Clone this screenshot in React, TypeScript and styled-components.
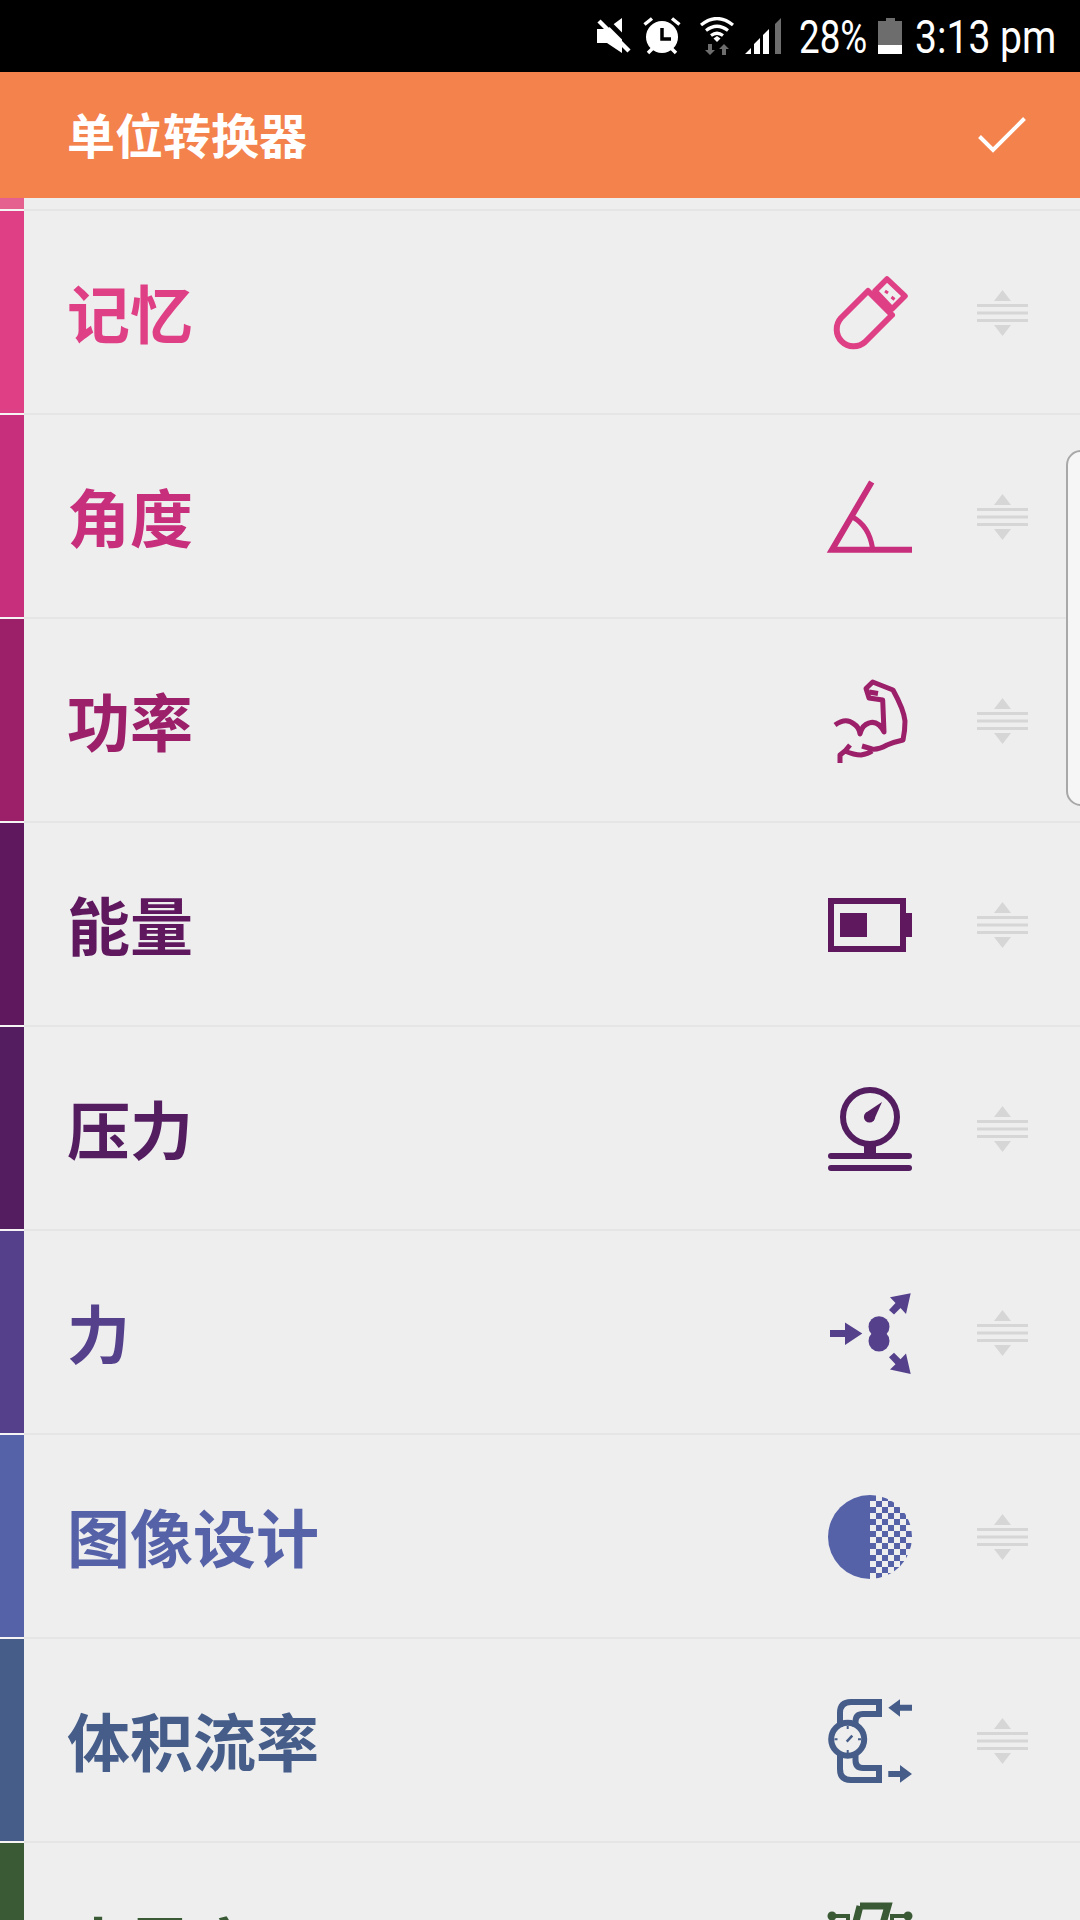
import React from "react";
import styled, { createGlobalStyle } from "styled-components";

const Global = createGlobalStyle`
  html, body { margin: 0; padding: 0; background: #eeeeef; }
  #root { width: 1080px; height: 1920px; }
`;

const Page = styled.div`
  position: relative;
  width: 1080px;
  height: 1920px;
  overflow: hidden;
  display: flex;
  flex-direction: column;
  background: #eeeeef;
  font-family: "Noto Sans CJK SC", "Noto Sans", sans-serif;
`;

const StatusBar = styled.div`
  height: 72px;
  flex: none;
  background: #000;
  color: #fff;
  display: flex;
  align-items: center;
  justify-content: flex-end;
  padding-right: 25px;
`;

const StatusIcon = styled.svg<{ $ml: number }>`
  flex: none;
  display: block;
  margin-left: ${(p) => p.$ml}px;
`;

const StatusText = styled.span<{ $ml: number; $w: number; $squeeze: number }>`
  font-family: Roboto, "Liberation Sans", sans-serif;
  font-size: 46px;
  line-height: 72px;
  width: ${(p) => p.$w}px;
  margin-left: ${(p) => p.$ml}px;
  margin-top: 1px;
  white-space: nowrap;
  display: block;
  transform: scaleX(${(p) => p.$squeeze});
  transform-origin: left center;
`;

const AppBar = styled.header`
  height: 126px;
  flex: none;
  background: #f3824d;
  color: #fff;
  display: flex;
  align-items: center;
  justify-content: space-between;
  padding: 0 54px 0 67px;
`;

const Title = styled.h1`
  margin: -5px 0 0;
  font-size: 48px;
  font-weight: 700;
  line-height: 1;
`;

const CheckIcon = styled.svg`
  display: block;
`;

const List = styled.div`
  flex: 1;
  min-height: 0;
  overflow: hidden;
`;

const PartialRow = styled.div`
  height: 13px;
  display: flex;
`;

const Row = styled.div`
  height: 204px;
  flex: none;
  display: flex;
`;

const Stripe = styled.div<{ $color: string }>`
  width: 24px;
  flex: none;
  box-sizing: border-box;
  background: ${(p) => p.$color};
  background-clip: padding-box;
  border-bottom: 2px solid #f6f4f5;
`;

const RowBody = styled.div<{ $color: string }>`
  flex: 1;
  box-sizing: border-box;
  border-bottom: 2px solid #e5e5e6;
  padding: 2px 52px 0 43px;
  display: flex;
  align-items: center;
  color: ${(p) => p.$color};
`;

const Label = styled.span`
  flex: 1;
  margin-top: -6px;
  font-size: 63px;
  font-weight: 700;
  line-height: 1;
  white-space: nowrap;
`;

const CategoryIcon = styled.svg`
  width: 84px;
  height: 84px;
  flex: none;
  display: block;
  overflow: visible;
`;

const DragHandle = styled.svg`
  width: 51px;
  height: 46px;
  flex: none;
  display: block;
  margin-left: 65px;
  fill: #d6d6d6;
`;

const EdgeTab = styled.div`
  position: absolute;
  left: 1066px;
  top: 450px;
  width: 30px;
  height: 356px;
  box-sizing: border-box;
  border: 2px solid #a8a8a8;
  border-radius: 22px;
  background: #f6f6f6;
`;

const Usb = () => (
  <CategoryIcon viewBox="0 0 84 84" fill="none" stroke="currentColor" strokeWidth="6">
    <path d="M40 20 L64 44 L37 71 A17 17 0 0 1 13 47 Z" strokeLinejoin="round" />
    <path d="M59 8 L77 25 L64 38 L47 20 Z" strokeWidth="5.5" strokeLinejoin="round" />
    <path d="M57 20 L60 22 M63.5 26 L66.5 28.5" strokeWidth="3" />
  </CategoryIcon>
);

const Angle = () => (
  <CategoryIcon viewBox="0 0 84 84" fill="none" stroke="currentColor" strokeWidth="6">
    <path d="M84 74.7 H4 L43.7 7" />
    <path d="M24.5 42 Q41 51 44.5 73" strokeWidth="5" />
  </CategoryIcon>
);

const Arm = () => (
  <CategoryIcon viewBox="0 0 84 84" fill="none" stroke="currentColor" strokeWidth="5" strokeLinejoin="round">
    <path d="M7 46 Q18 38 26 45 Q31 48 32 55 Q34 46 41 44 Q50 41 56 53 L54.7 21 L41 19 L38 9.5 L44.7 3 L65 11 Q76 31 77 42 Q77 52 75 61 Q66 63 59 66 Q50 71 44 70 L34 67" />
    <path d="M22 66 L17 72 Q26 76 33 76 Q40 75 44 72 M17 72 L12 76 V84" />
    <path d="M41 13 L50 14.5" />
  </CategoryIcon>
);

const Battery = () => (
  <CategoryIcon viewBox="0 0 84 84" fill="currentColor">
    <rect x="3" y="18" width="72" height="48" fill="none" stroke="currentColor" strokeWidth="6" />
    <rect x="78" y="30" width="6" height="24" />
    <rect x="12" y="30" width="27" height="24" />
  </CategoryIcon>
);

const Gauge = () => (
  <CategoryIcon viewBox="0 0 84 84" fill="currentColor">
    <circle cx="42" cy="30" r="27" fill="none" stroke="currentColor" strokeWidth="6" />
    <rect x="36" y="56" width="12" height="12" />
    <rect x="0" y="66" width="84" height="6" rx="3" />
    <rect x="0" y="78" width="84" height="6" rx="3" />
    <circle cx="41.5" cy="30" r="5.6" />
    <path d="M37.5 26 L54 15 L45.5 34 Z" />
  </CategoryIcon>
);

const Force = () => (
  <CategoryIcon viewBox="0 0 84 84" fill="currentColor">
    <path d="M2 39 H17 V31.5 L34.3 42.5 L17 54 V46 H2 Z" />
    <circle cx="51" cy="35.7" r="10.5" />
    <circle cx="51" cy="50" r="10.5" />
    <path d="M82.7 2.3 L62 6.3 L67.5 12 L61 19 L66 23.5 L72.5 17 L78 23 Z" />
    <path d="M82.7 83 L62 78.5 L67.5 73.3 L61 66.3 L66 61.8 L72.5 68.3 L78 62.5 Z" />
  </CategoryIcon>
);

const Contrast = () => (
  <CategoryIcon viewBox="0 0 84 84" fill="currentColor">
    <defs>
      <pattern id="checks" x="42" y="0" width="12" height="12" patternUnits="userSpaceOnUse">
        <rect x="0" y="0" width="6" height="6" fill="currentColor" />
        <rect x="6" y="6" width="6" height="6" fill="currentColor" />
      </pattern>
      <clipPath id="disc">
        <circle cx="42" cy="42" r="42" />
      </clipPath>
    </defs>
    <g clipPath="url(#disc)">
      <rect x="0" y="0" width="42" height="84" />
      <rect x="42" y="0" width="42" height="84" fill="url(#checks)" />
    </g>
  </CategoryIcon>
);

const Flow = () => (
  <CategoryIcon viewBox="0 0 84 84" fill="none" stroke="currentColor" strokeWidth="6">
    <path d="M12 28 V14 Q12 3 23 3 H51 V15 H35 Q27.5 15 27.5 23 V28" />
    <path d="M12 56 V70 Q12 81 23 81 H51 V69 H35 Q27.5 69 27.5 61 V56" />
    <circle cx="19.7" cy="40.3" r="16.5" />
    <path d="M18.7 42.7 L24.3 36.7" strokeWidth="2.5" />
    <path d="M19.7 27 V30 M19.7 51 V54 M6.5 40.3 H9.5 M30 40.3 H33" strokeWidth="2" />
    <path d="M60.3 8.7 L72 0.3 V5.7 H84 V11.7 H72 V17.7 Z" fill="currentColor" stroke="none" />
    <path d="M84 75 L72 66 V72 H60.3 V78 H72 V83.7 Z" fill="currentColor" stroke="none" />
  </CategoryIcon>
);

const Circuit = () => (
  <CategoryIcon viewBox="0 0 84 84" fill="none" stroke="currentColor" strokeWidth="7">
    <path d="M32 3 H60 L50 38 M32 3 L23 38" />
    <circle cx="4" cy="13" r="4.5" fill="currentColor" stroke="none" />
    <circle cx="80" cy="13" r="4.5" fill="currentColor" stroke="none" />
    <path d="M4 13 H20 V30 M80 13 H64 V30" strokeWidth="4" />
  </CategoryIcon>
);

const Handle = () => (
  <DragHandle viewBox="0 0 51 46">
    <path d="M25.5 0 L34 11 H17 Z" />
    <rect x="0" y="14" width="51" height="3" />
    <rect x="0" y="21.5" width="51" height="3" />
    <rect x="0" y="29" width="51" height="3" />
    <path d="M17 35 H34 L25.5 46 Z" />
  </DragHandle>
);

const rows = [
  { label: "记忆", color: "#df3f84", Icon: Usb },
  { label: "角度", color: "#c72e7b", Icon: Angle },
  { label: "功率", color: "#9b1f69", Icon: Arm },
  { label: "能量", color: "#5f175e", Icon: Battery },
  { label: "压力", color: "#531d60", Icon: Gauge },
  { label: "力", color: "#55408c", Icon: Force },
  { label: "图像设计", color: "#5662a8", Icon: Contrast },
  { label: "体积流率", color: "#455d88", Icon: Flow },
  { label: "电导率", color: "#395a35", Icon: Circuit },
];

export default function App() {
  return (
    <Page>
      <Global />
      <StatusBar>
        <StatusIcon $ml={0} width="36" height="36" viewBox="0 0 36 36">
          <path d="M1 11 H11 L26 0 V35 L11 25 H1 Z" fill="#fff" />
          <path d="M8 0 L36 28" stroke="#000" strokeWidth="5" />
          <path d="M3 3 L33 33" stroke="#fff" strokeWidth="4.5" />
        </StatusIcon>
        <StatusIcon $ml={11} width="38" height="38" viewBox="0 0 38 38">
          <circle cx="19" cy="20" r="16" fill="#fff" />
          <path d="M19 11 V22 H28" fill="none" stroke="#000" strokeWidth="3.5" />
          <path d="M1.5 7.5 L9 1.5 M36.5 7.5 L29 1.5 M5 36 L10 31 M33 36 L28 31" stroke="#fff" strokeWidth="3.5" />
        </StatusIcon>
        <StatusIcon $ml={19} width="34" height="38" viewBox="0 0 34 38">
          <path d="M1 8 Q17 -5 33 8 M6 13.5 Q17 5 28 13.5 M11 18.5 Q17 14 23 18.5" fill="none" stroke="#fff" strokeWidth="3.2" />
          <path d="M13.5 21.5 L17 19 L20.5 21.5 L17 25 Z" fill="#fff" />
          <path d="M8 27 H12 V33 H15 L10 38 L5 33 H8 Z M22 38 H26 V32 H29 L24 27 L19 32 H22 Z" fill="#6d6d6d" />
        </StatusIcon>
        <StatusIcon $ml={11} width="37" height="36" viewBox="0 0 37 36">
          <path d="M0 36 L6 30 V36 Z M9 36 V26 L15 20 V36 Z" fill="#fff" />
          <path d="M18 36 V17 L24 11 V36 Z" fill="#fff" />
          <path d="M30 36 V6 L36 0 V36 Z" fill="#6d6d6d" />
        </StatusIcon>
        <StatusText $ml={17} $w={69} $squeeze={0.8}>28%</StatusText>
        <StatusIcon $ml={10} width="24" height="36" viewBox="0 0 24 36">
          <path d="M8 0 H17 V3 H24 V27 H0 V3 H8 Z" fill="#6d6d6d" />
          <rect x="0" y="27" width="24" height="9" fill="#fff" />
        </StatusIcon>
        <StatusText $ml={13} $w={140} $squeeze={0.85}>3:13 pm</StatusText>
      </StatusBar>
      <AppBar>
        <Title>单位转换器</Title>
        <CheckIcon width="48" height="36" viewBox="0 0 48 36">
          <path d="M1.5 19.5 L15 33 L46.5 1.5" fill="none" stroke="#fff" strokeWidth="4" />
        </CheckIcon>
      </AppBar>
      <List>
        <PartialRow>
          <Stripe $color="#e5608f" />
          <RowBody $color="#e5608f" />
        </PartialRow>
        {rows.map(({ label, color, Icon }) => (
          <Row key={label}>
            <Stripe $color={color} />
            <RowBody $color={color}>
              <Label>{label}</Label>
              <Icon />
              <Handle />
            </RowBody>
          </Row>
        ))}
      </List>
      <EdgeTab />
    </Page>
  );
}
